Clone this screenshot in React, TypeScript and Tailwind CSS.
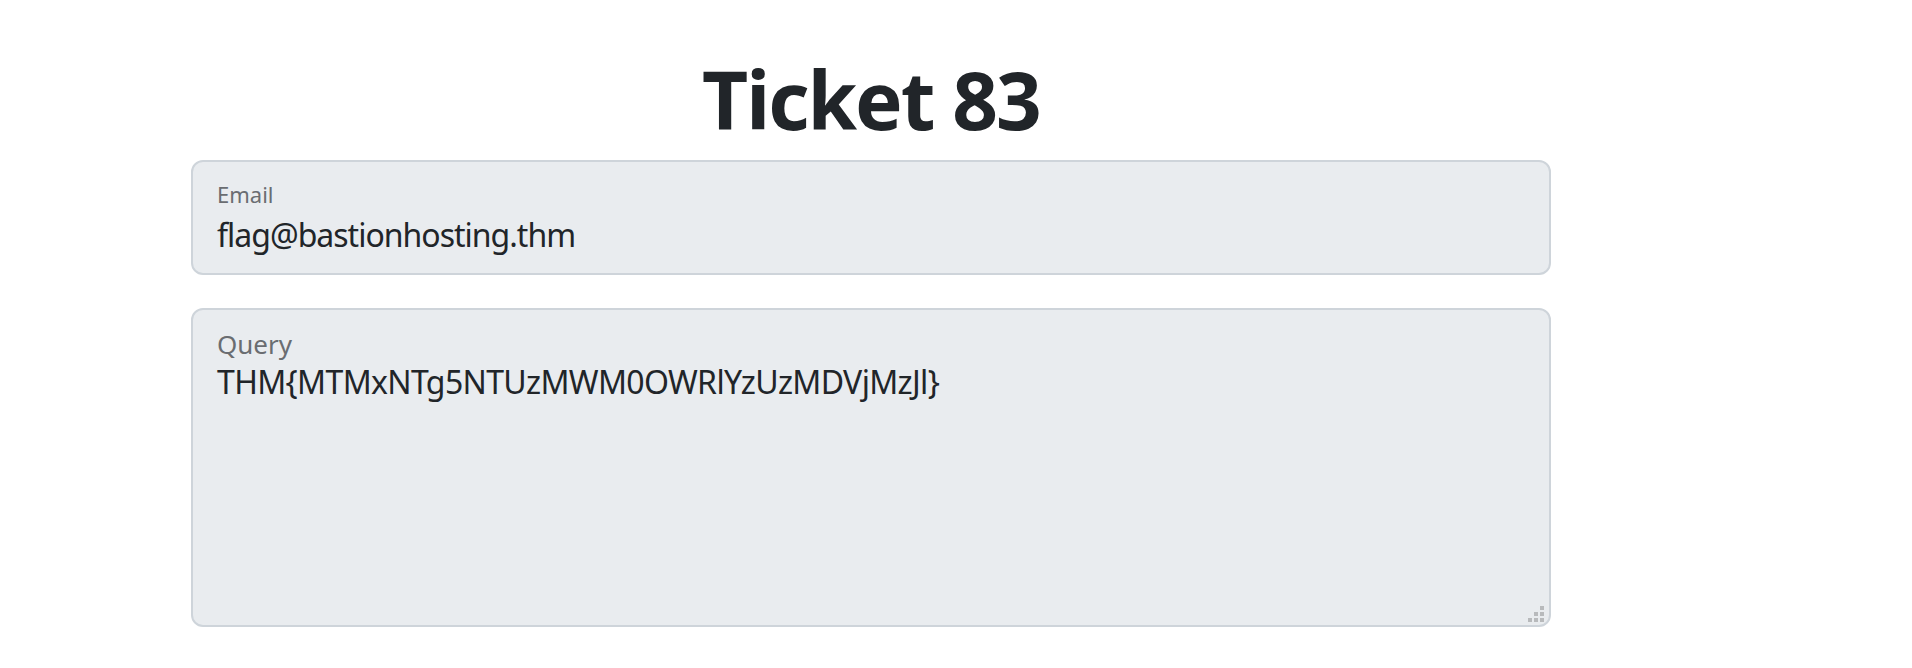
import React from "react";

export default function App() {
  const font = { fontFamily: '"Noto Sans", "Open Sans", sans-serif' };
  return (
    <div className="min-h-[668px] w-full bg-white text-[#212529]" style={font}>
      <div className="ml-[191px] w-[1360px] pt-[51px]">
        <h1 className="text-center text-[80px] leading-[96px] font-bold tracking-[-2px] text-[#212529]">Ticket 83</h1>
        <div className="mt-[13px] h-[115px] rounded-[12px] border-2 border-[#ced4da] bg-[#e9ecef] px-[24px] pt-[18px]">
          <div className="text-[22px] leading-[28px] text-[#6a6d71]">Email</div>
          <div className="mt-[7px] text-[32px] leading-[40px] tracking-[-1px] text-[#212529]">flag@bastionhosting.thm</div>
        </div>
        <div className="relative mt-[33px] h-[319px] rounded-[12px] border-2 border-[#ced4da] bg-[#e9ecef] px-[24px] pt-[18px]">
          <div className="text-[26px] leading-[32px] text-[#6a6d71]">Query</div>
          <div className="mt-[2px] text-[32px] leading-[40px] tracking-[-0.65px] text-[#212529]">THM{"{"}MTMxNTg5NTUzMWM0OWRlYzUzMDVjMzJl{"}"}</div>
          <svg className="absolute right-[5px] bottom-[3px]" width="16" height="16" viewBox="0 0 16 16">
            <rect x="12" y="0" width="4" height="4" fill="#b8babc" />
            <rect x="6" y="6" width="4" height="4" fill="#b8babc" />
            <rect x="12" y="6" width="4" height="4" fill="#b8babc" />
            <rect x="0" y="12" width="4" height="4" fill="#b8babc" />
            <rect x="6" y="12" width="4" height="4" fill="#b8babc" />
            <rect x="12" y="12" width="4" height="4" fill="#b8babc" />
          </svg>
        </div>
      </div>
    </div>
  );
}
